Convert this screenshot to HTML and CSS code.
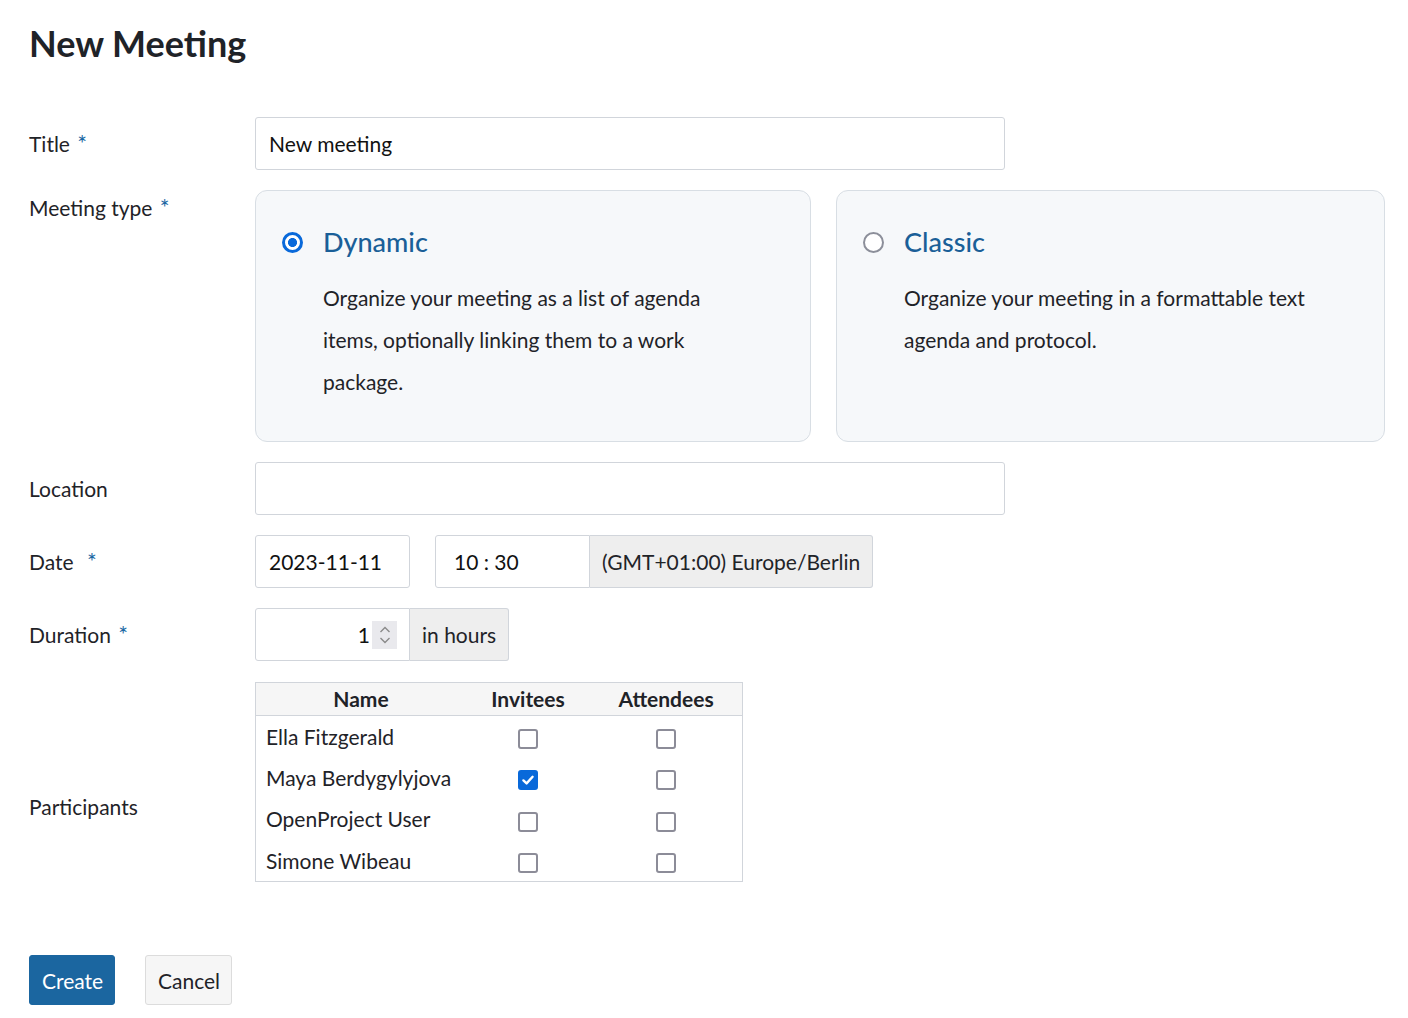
FILE: index.html
```html
<!DOCTYPE html>
<html lang="en">
<head>
<meta charset="utf-8">
<title>New Meeting</title>
<link rel="stylesheet" href="styles.css">
</head>
<body>
<div class="page">
  <h1 class="page-title">New Meeting</h1>
  <form class="form">
    <div class="row">
      <label class="label">Title <span class="req">*</span></label>
      <div class="field"><div class="input wide">New meeting</div></div>
    </div>

    <div class="row row-top">
      <label class="label label-type">Meeting type <span class="req">*</span></label>
      <div class="cards">
        <div class="card">
          <div class="card-head">
            <span class="radio checked"></span>
            <span class="card-title">Dynamic</span>
          </div>
          <p class="card-desc">Organize your meeting as a list of agenda items, optionally linking them to a work package.</p>
        </div>
        <div class="card">
          <div class="card-head">
            <span class="radio"></span>
            <span class="card-title">Classic</span>
          </div>
          <p class="card-desc">Organize your meeting in a formattable text agenda and protocol.</p>
        </div>
      </div>
    </div>

    <div class="row">
      <label class="label">Location</label>
      <div class="field"><div class="input wide"></div></div>
    </div>

    <div class="row">
      <label class="label">Date <span class="req req-wide">*</span></label>
      <div class="field inline">
        <div class="input small">2023-11-11</div>
        <div class="group">
          <div class="input small time">10 : 30</div>
          <div class="addon">(GMT+01:00) Europe/Berlin</div>
        </div>
      </div>
    </div>

    <div class="row">
      <label class="label">Duration <span class="req">*</span></label>
      <div class="field">
        <div class="group">
          <div class="input small number"><span class="num">1</span><span class="spin"><svg width="14" height="26" viewBox="0 0 14 26"><path d="M2.5 10 L7 5.5 L11.5 10" fill="none" stroke="#8a8a8a" stroke-width="1.4"/><path d="M2.5 16 L7 20.5 L11.5 16" fill="none" stroke="#8a8a8a" stroke-width="1.4"/></svg></span></div>
          <div class="addon">in hours</div>
        </div>
      </div>
    </div>

    <div class="row row-top">
      <label class="label label-part">Participants</label>
      <div class="field table-field">
        <table class="ptable">
          <thead>
            <tr><th class="c-name">Name</th><th class="c-inv">Invitees</th><th class="c-att">Attendees</th></tr>
          </thead>
          <tbody>
            <tr><td>Ella Fitzgerald</td><td class="cc"><span class="cb"></span></td><td class="cc"><span class="cb"></span></td></tr>
            <tr><td>Maya Berdygylyjova</td><td class="cc"><span class="cb checked"><svg width="14" height="14" viewBox="0 0 14 14"><path d="M2.4 7.4 L5.6 10.4 L11.6 3.8" fill="none" stroke="#fff" stroke-width="2.4" stroke-linecap="round" stroke-linejoin="round"/></svg></span></td><td class="cc"><span class="cb"></span></td></tr>
            <tr><td>OpenProject User</td><td class="cc"><span class="cb"></span></td><td class="cc"><span class="cb"></span></td></tr>
            <tr><td>Simone Wibeau</td><td class="cc"><span class="cb"></span></td><td class="cc"><span class="cb"></span></td></tr>
          </tbody>
        </table>
      </div>
    </div>

    <div class="actions">
      <button type="button" class="btn btn-primary">Create</button>
      <button type="button" class="btn btn-default">Cancel</button>
    </div>
  </form>
</div>
</body>
</html>
```

FILE: styles.css
```css
* { box-sizing: border-box; }
html, body { margin: 0; padding: 0; background: #fff; }
body {
  font-family: "Lato", "Noto Sans", sans-serif;
  font-size: 21px;
  color: #1f2328;
}
.page { padding: 20px 22px 0 29px; }
.page-title {
  margin: 0;
  font-size: 36px;
  line-height: 46px;
  font-weight: 700;
  color: #1f2328;
}
.form {
  margin-top: 51px;
  display: flex;
  flex-direction: column;
  gap: 20px;
}
.row { display: flex; align-items: center; }
.row-top { align-items: flex-start; }
.label {
  width: 226px;
  flex: none;
  line-height: 28px;
  color: #1f2328;
}
.label-type { margin-top: 3px; }
.label-part { margin-top: 112px; }
.req { color: #1a67a3; margin-left: 2px; font-size: 23px; }
.req-wide { margin-left: 8px; }
.field { flex: none; }
.table-field { margin-top: 1px; }
.inline { display: flex; gap: 25px; }
.input {
  height: 53px;
  border: 1px solid #d1d5db;
  border-radius: 3px;
  background: #fff;
  padding: 0 13px;
  display: flex;
  align-items: center;
  line-height: 28px;
  color: #111;
}
.wide { width: 750px; }
.small { width: 155px; }
.time { padding-left: 18px; border-radius: 3px 0 0 3px; }
.group { display: flex; }
.addon {
  height: 53px;
  border: 1px solid #d1d5db;
  border-left: none;
  background: #eeeeee;
  padding: 0 12px;
  display: flex;
  align-items: center;
  border-radius: 0 3px 3px 0;
  color: #1f2328;
}
.number { justify-content: flex-end; padding: 0 12px 0 0; border-radius: 3px 0 0 3px; }
.num { margin-right: 2px; }
.spin {
  width: 25px;
  height: 28px;
  background: #e9e9ed;
  display: flex;
  align-items: center;
  justify-content: center;
}
.spin svg { display: block; }

.cards { display: flex; gap: 25px; }
.card {
  background: #f6f8fa;
  border: 1px solid #d8dee4;
  border-radius: 12px;
  padding: 33px 20px 32px 26px;
  height: 252px;
}
.card:first-child { width: 556px; }
.card:last-child { width: 549px; }
.card-head { display: flex; align-items: center; gap: 20px; height: 36px; }
.radio {
  width: 21px; height: 21px;
  border-radius: 50%;
  border: 2.5px solid #8c8f9a;
  background: #fff;
  flex: none;
}
.radio.checked {
  border: 3px solid #0969da;
  background: radial-gradient(circle, #0969da 0 4.2px, #fff 4.8px);
}
.card-title {
  font-size: 27px;
  font-weight: 500;
  color: #1a5f98;
  line-height: 36px;
}
.card-desc {
  margin: 17px 0 0 41px;
  max-width: 415px;
  line-height: 42px;
  color: #1f2328;
}

.ptable {
  border-collapse: collapse;
  border: 1px solid #d1d5db;
  width: 488px;
}
.ptable th {
  background: #f6f6f6;
  font-weight: 700;
  height: 33px;
  padding: 0;
  line-height: 28px;
  text-align: center;
  border-bottom: 1px solid #d1d5db;
  color: #1f2328;
}
.c-name { width: 210px; }
.c-inv { width: 124px; }
.c-att { width: 152px; }
.ptable td {
  height: 41.5px;
  padding: 0 0 0 10px;
  line-height: 28px;
  color: #1f2328;
}
.ptable td.cc { text-align: center; padding: 0; }
.cb {
  display: inline-flex;
  align-items: center;
  justify-content: center;
  width: 20px; height: 20px;
  border: 2px solid #8c8c98;
  border-radius: 3px;
  background: #fff;
  vertical-align: middle;
}
.cb.checked { background: #0969da; border-color: #0969da; }

.actions { display: flex; gap: 30px; margin-top: 53px; }
.btn {
  font-family: inherit;
  font-size: 21px;
  height: 50px;
  padding: 0 12px;
  border-radius: 3px;
  cursor: pointer;
}
.btn-primary { background: #1b66a0; color: #fff; border: 1px solid #1b66a0; width: 86px; }
.btn-default { background: #f6f6f6; color: #1f2328; border: 1px solid #dcdcdc; width: 87px; }
```
